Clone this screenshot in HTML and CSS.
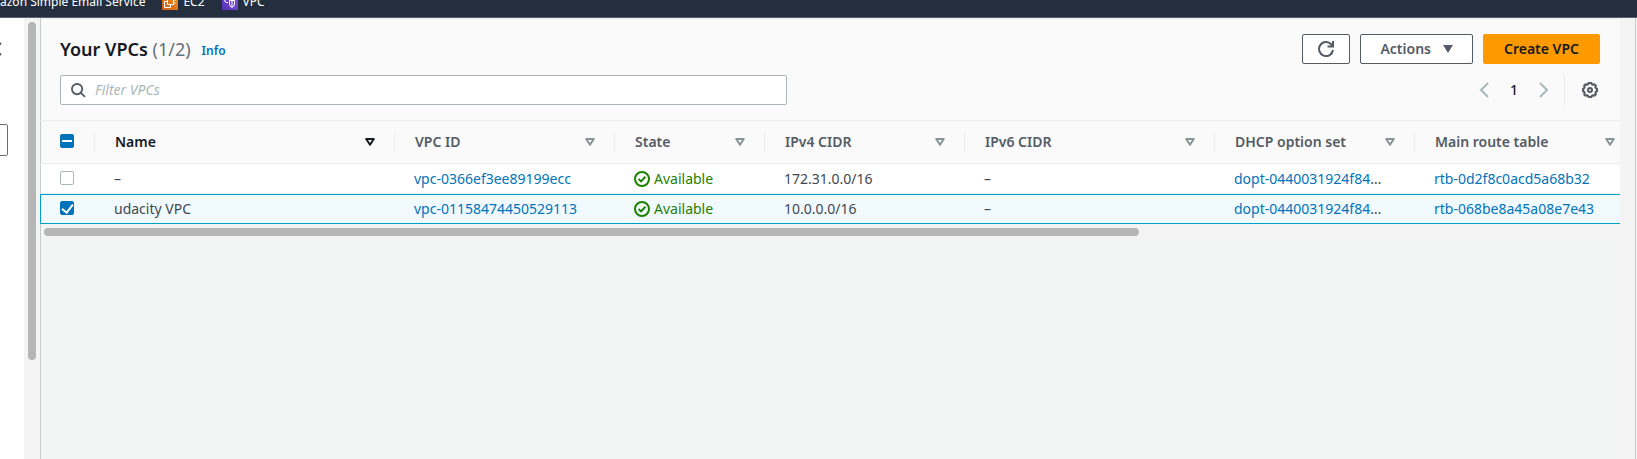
FILE: index.html
```
<!DOCTYPE html>
<html lang="en">
<head>
<meta charset="utf-8">
<title>Your VPCs</title>
<link rel="stylesheet" href="styles.css">
</head>
<body>
<svg class="defs" aria-hidden="true">
  <symbol id="tri" viewBox="0 0 10 8"><path d="M1.2 1h7.6L5 6.800z" fill="none" stroke="currentColor" stroke-width="2" stroke-linejoin="round"/></symbol>
  <symbol id="ok" viewBox="0 0 16 16"><g fill="none" stroke="currentColor" stroke-width="2"><circle cx="8" cy="8" r="7"/><path d="M4.6 8.1l2.5 2.3 4.3-4.6"/></g></symbol>
</svg>
<header class="topnav">
  <a class="fav" href="#">azon Simple Email Service</a>
  <a class="fav" href="#"><svg class="svc ec2" viewBox="0 0 16 16"><g fill="none" stroke="#fff"><path d="M5.500 4.500h6v6h-6zM5 7.500H2.500v6h6V11M7 4V2.500M10 4V2.500M12 6h1.500M12 9h1.500"/></g></svg>EC2</a>
  <a class="fav" href="#"><svg class="svc vpc" viewBox="0 0 16 16"><g fill="none" stroke="#fff"><path d="M6 8.500H4.500a2 2 0 0 1-1-3.500M7.500 6.500h5V10q0 2.500-2.500 3.500Q7.500 12.500 7.500 10zM10 7v6M12 5.500a2 2 0 0 0-2-2"/></g></svg>VPC</a>
</header>
<div class="shell">
  <aside class="side">
    <div class="side-body">
      <button class="collapse" aria-label="Close navigation"><svg viewBox="0 0 10 16"><path d="M9 2L3 8l6 6" fill="none" stroke="currentColor" stroke-width="2"/></svg></button>
      <input class="side-input" type="text" aria-label="Filter by VPC">
    </div>
    <div class="vscroll"><div class="vthumb"></div></div>
  </aside>
  <main class="content">
    <section class="panel">
      <div class="panel-head">
        <div class="row">
          <h1>Your VPCs <span class="count">(1/2)</span></h1>
          <a class="info" href="#">Info</a>
          <div class="actions">
            <button class="btn refresh" aria-label="Refresh"><svg viewBox="0 0 16 16"><g fill="none" stroke="currentColor" stroke-width="2"><path d="M15 9A7 7 0 1 1 13.200 3.300L15 5.200"/><path d="M15 0v5.500H9.500"/></g></svg></button>
            <button class="btn">Actions <svg class="caret" viewBox="0 0 10 8"><path d="M0 0h10L5 8z" fill="currentColor"/></svg></button>
            <button class="btn primary">Create VPC</button>
          </div>
        </div>
        <div class="row tools">
          <label class="search">
            <svg viewBox="0 0 16 16"><g fill="none" stroke="currentColor" stroke-width="2"><circle cx="6.500" cy="6.500" r="5.500"/><path d="M10.500 10.500l4.500 4.300"/></g></svg>
            <input type="text" placeholder="Filter VPCs" aria-label="Filter VPCs">
          </label>
          <nav class="pager" aria-label="Pagination">
            <button class="chev" aria-label="Previous page"><svg viewBox="0 0 10 16"><path d="M9 1L2 8l7 7" fill="none" stroke="currentColor" stroke-width="2"/></svg></button>
            <button class="page">1</button>
            <button class="chev" aria-label="Next page"><svg viewBox="0 0 10 16"><path d="M1 1l7 7-7 7" fill="none" stroke="currentColor" stroke-width="2"/></svg></button>
            <button class="gear" aria-label="Preferences"><svg viewBox="0 0 16 16"><g fill="none" stroke="currentColor"><circle cx="8" cy="8" r="2" stroke-width="2"/><path stroke-width="2" stroke-linejoin="round" d="M6.500 1h3l.4 1.300 1.300.5 1.200-.6 1.500 1.500-.6 1.200.5 1.300 1.200.4v2.800l-1.200.4-.5 1.300.6 1.200-1.500 1.500-1.200-.6-1.300.5-.4 1.300h-3l-.4-1.300-1.300-.5-1.200.6-1.500-1.500.6-1.200-.5-1.300L1 9.400V6.600l1.200-.4.5-1.300-.6-1.200 1.500-1.500 1.200.6 1.300-.5z"/></g></svg></button>
          </nav>
        </div>
      </div>
      <div class="table-wrap">
        <table>
          <colgroup><col class="c-check"><col class="c-name"><col class="c-id"><col class="c-state"><col class="c-v4"><col class="c-v6"><col class="c-dhcp"><col class="c-route"></colgroup>
          <thead>
            <tr>
              <th class="check"><input class="mixed" type="checkbox" aria-label="Select all VPCs"></th>
              <th class="sorted"><div class="th">Name<svg><use href="#tri"/></svg></div></th>
              <th><div class="th">VPC ID<svg><use href="#tri"/></svg></div></th>
              <th><div class="th">State<svg><use href="#tri"/></svg></div></th>
              <th><div class="th">IPv4 CIDR<svg><use href="#tri"/></svg></div></th>
              <th><div class="th">IPv6 CIDR<svg><use href="#tri"/></svg></div></th>
              <th><div class="th">DHCP option set<svg><use href="#tri"/></svg></div></th>
              <th><div class="th">Main route table<svg><use href="#tri"/></svg></div></th>
            </tr>
          </thead>
          <tbody>
            <tr>
              <td class="check"><input type="checkbox" aria-label="Select vpc-0366ef3ee89199ecc"></td>
              <td>–</td>
              <td><a href="#">vpc-0366ef3ee89199ecc</a></td>
              <td><span class="state"><svg><use href="#ok"/></svg>Available</span></td>
              <td>172.31.0.0/16</td>
              <td>–</td>
              <td><a href="#">dopt-0440031924f84</a>…</td>
              <td><a href="#">rtb-0d2f8c0acd5a68b32</a></td>
            </tr>
            <tr class="selected">
              <td class="check"><input type="checkbox" checked aria-label="Select vpc-01158474450529113"></td>
              <td>udacity VPC</td>
              <td><a href="#">vpc-01158474450529113</a></td>
              <td><span class="state"><svg><use href="#ok"/></svg>Available</span></td>
              <td>10.0.0.0/16</td>
              <td>–</td>
              <td><a href="#">dopt-0440031924f84</a>…</td>
              <td><a href="#">rtb-068be8a45a08e7e43</a></td>
            </tr>
          </tbody>
        </table>
      </div>
      <div class="hscroll"><div class="hthumb"></div></div>
    </section>
  </main>
  <div class="gutter"></div>
</div>
</body>
</html>
```
FILE: styles.css
```
* { box-sizing: border-box; }
body {
  margin: 0;
  height: 100vh;
  display: flex;
  flex-direction: column;
  overflow: hidden;
  background: #f2f3f3;
  color: #414750;
  font: 14px/20px "Noto Sans", "Open Sans", sans-serif;
}
a { color: #0073bb; text-decoration: none; }
button, input { font: inherit; }
button { padding: 0; border: 0; background: none; color: inherit; }
svg { display: block; flex: none; }
.defs { position: absolute; width: 0; height: 0; }

.topnav {
  flex: none;
  height: 18px;
  display: flex;
  align-items: flex-end;
  gap: 17px;
  padding-bottom: 6px;
  overflow: hidden;
  background: #232f3e;
  border-bottom: 1px solid #5b636e;
}
.fav {
  display: flex;
  align-items: center;
  gap: 5px;
  color: #fff;
  font-size: 12px;
  line-height: 18px;
}
.svc { width: 16px; height: 16px; }
.ec2 { background: linear-gradient(45deg, #d05c17, #f29020); }
.vpc { background: linear-gradient(45deg, #5230b4, #8a52e0); }

.shell { flex: 1; display: flex; min-height: 0; }
.side { flex: none; display: flex; width: 40px; background: #fff; }
.side-body { width: 24px; padding-top: 23px; overflow: hidden; }
.collapse { display: block; width: 10px; margin-left: -8px; color: #545b64; }
.collapse svg { width: 10px; height: 16px; }
.side-input {
  display: block;
  width: 48px;
  height: 32px;
  margin: 67px 0 0 -40px;
  border: 1px solid #687078;
  border-radius: 2px;
  background: #fff;
}
.vscroll { width: 16px; padding: 4px; background: #f4f4f4; }
.vthumb { height: 78%; border-radius: 4px; background: #b6b6b6; }
.gutter { flex: none; width: 17px; border-right: 1px solid #f4f4f4; background: #f4f4f4; box-shadow: inset -1px 0 #c8cccc; }

.content { flex: 1; min-width: 0; box-shadow: inset 1px 0 #c6cccc; }
.panel-head, .hscroll, .check { border-left: 1px solid #c6cccc; }
.panel-head { padding: 15px 20px 15px 19px; border-top: 1px solid #eaeded; background: #fafafa; }
.row { display: flex; align-items: center; }
h1 { margin: 0; color: #16191f; font-size: 18px; line-height: 22px; font-weight: 600; }
.count { color: #687078; font-weight: 400; }
.info { margin: 4px 0 0 11px; font-size: 12px; line-height: 18px; font-weight: 600; }
.actions { display: flex; gap: 10px; margin-left: auto; }
.btn {
  display: flex;
  align-items: center;
  justify-content: center;
  gap: 12px;
  height: 30px;
  padding: 0 19px;
  border: 1px solid #545b64;
  border-radius: 2px;
  background: #fff;
  color: #545b64;
  font-weight: 600;
}
.refresh { width: 48px; padding: 0; }
.refresh svg { width: 16px; height: 16px; }
.caret { width: 10px; height: 8px; }
.primary { padding: 0 20px; border-color: #ff9900; background: #ff9900; color: #16191f; }

.tools { margin-top: 11px; justify-content: space-between; }
.search {
  display: flex;
  align-items: center;
  gap: 9px;
  width: 47.2%;
  height: 30px;
  padding: 0 10px;
  border: 1px solid #aab7b8;
  border-radius: 2px;
  background: #fff;
  color: #545b64;
}
.search svg { width: 15px; height: 15px; }
.search input { flex: 1; min-width: 0; padding: 0; border: 0; outline: 0; background: none; }
.search input::placeholder { color: #aab7b8; font-style: italic; opacity: 1; }
.pager { display: flex; align-items: center; }
.chev { color: #aab7b8; }
.chev svg { width: 10px; height: 16px; }
.page { width: 50px; color: #16191f; font-weight: 500; }
.gear { height: 30px; margin-left: 15px; padding: 0 2px 0 17px; border-left: 1px solid #eaeded; color: #545b64; }
.gear svg { width: 16px; height: 16px; }

.table-wrap { overflow: hidden; border-top: 1px solid #eaeded; }
table { width: 1594px; table-layout: fixed; border-collapse: separate; border-spacing: 0; }
.c-check { width: 54px; }
.c-name { width: 300px; }
.c-id { width: 220px; }
.c-state { width: 150px; }
.c-v4, .c-dhcp { width: 200px; }
.c-v6 { width: 250px; }
.c-route { width: 220px; }
th { height: 43px; padding: 0; border-bottom: 1px solid #eaeded; background: #fafafa; color: #545b64; font-weight: 600; text-align: left; }
.th {
  display: flex;
  align-items: center;
  justify-content: space-between;
  padding: 0 19px 0 20px;
  border-left: 1px solid #eaeded;
}
.th svg { width: 10px; height: 8px; color: #879596; }
th.sorted, th.sorted svg { color: #16191f; }
td { height: 30px; padding: 0 18px 0 20px; border-bottom: 1px solid #eaeded; background: #fff; white-space: nowrap; }
.selected td { border-top: 1px solid #00a1c9; border-bottom-color: #00a1c9; background: #f1faff; }
.selected .check { border-left-color: #00a1c9; }
th.check, td.check { padding: 0 19px 2px; }
.check input {
  appearance: none;
  display: block;
  width: 14px;
  height: 14px;
  margin: 0;
  border: 1px solid #aab7b8;
  border-radius: 2px;
  background: #fff;
}
.check .mixed, .check input:checked { display: grid; place-items: center; border-color: #0073bb; background: #0073bb; }
.mixed::before { content: ""; width: 10px; height: 2px; background: #fff; }
.check input:checked::before { content: ""; width: 5px; height: 9px; margin-bottom: 3px; border: solid #fff; border-width: 0 2px 2px 0; transform: rotate(38deg); }
.state { display: flex; align-items: center; gap: 4px; color: #1d8102; }
.state svg { width: 16px; height: 16px; }

.hscroll { padding: 4px 3px; background: #f4f4f4; }
.hthumb { width: 69.6%; height: 8px; border-radius: 4px; background: #b6b6b6; }
```
